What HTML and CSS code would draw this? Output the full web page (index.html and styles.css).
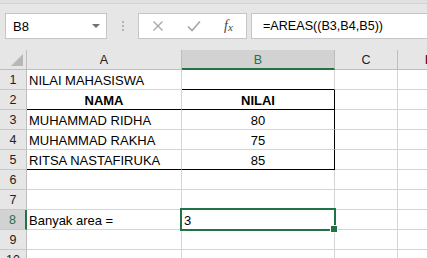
FILE: index.html
```html
<!DOCTYPE html>
<html>
<head>
<meta charset="utf-8">
<link rel="stylesheet" href="styles.css">
</head>
<body>
<div class="app">
  <div class="toolbar">
    <div class="namebox">
      <span class="ref">B8</span>
      <span class="caret"></span>
    </div>
    <div class="grip"><i></i><i></i><i></i></div>
    <div class="btnbox">
      <svg class="ico" width="12" height="12" viewBox="0 0 12 12"><path d="M1.5 1.5 L10.5 10.5 M10.5 1.5 L1.5 10.5" stroke="#a6a6a6" stroke-width="1.3" fill="none"/></svg>
      <svg class="ico chk" width="14" height="12" viewBox="0 0 14 12"><path d="M1 6.5 L5 10.5 L13 1.5" stroke="#a6a6a6" stroke-width="1.6" fill="none"/></svg>
      <span class="fx">f<sub>x</sub></span>
    </div>
    <div class="formula">=AREAS((B3,B4,B5))</div>
  </div>
  <div class="sheet">
    <div class="corner"><span class="tri"></span></div>
    <div class="ch">A</div>
    <div class="ch sel">B</div>
    <div class="ch">C</div>
    <div class="ch dcol">D</div>

    <div class="rh">1</div>
    <div class="c">NILAI MAHASISWA</div>
    <div class="c bb"></div>
    <div class="c"></div>
    <div class="c"></div>

    <div class="rh">2</div>
    <div class="c b ctr bb">NAMA</div>
    <div class="c b ctr br bb">NILAI</div>
    <div class="c"></div>
    <div class="c"></div>

    <div class="rh">3</div>
    <div class="c">MUHAMMAD RIDHA</div>
    <div class="c ctr br">80</div>
    <div class="c"></div>
    <div class="c"></div>

    <div class="rh">4</div>
    <div class="c">MUHAMMAD RAKHA</div>
    <div class="c ctr br">75</div>
    <div class="c"></div>
    <div class="c"></div>

    <div class="rh">5</div>
    <div class="c bbk">RITSA NASTAFIRUKA</div>
    <div class="c ctr br bbk">85</div>
    <div class="c"></div>
    <div class="c"></div>

    <div class="rh">6</div>
    <div class="c"></div>
    <div class="c"></div>
    <div class="c"></div>
    <div class="c"></div>

    <div class="rh">7</div>
    <div class="c"></div>
    <div class="c"></div>
    <div class="c"></div>
    <div class="c"></div>

    <div class="rh sel">8</div>
    <div class="c">Banyak area =</div>
    <div class="c active">3<span class="selbox"><span class="handle"></span></span></div>
    <div class="c"></div>
    <div class="c"></div>

    <div class="rh">9</div>
    <div class="c"></div>
    <div class="c"></div>
    <div class="c"></div>
    <div class="c"></div>

    <div class="rh">10</div>
    <div class="c"></div>
    <div class="c"></div>
    <div class="c"></div>
    <div class="c"></div>
  </div>
</div>
</body>
</html>
```

FILE: styles.css
```css
html, body {
  margin: 0;
  padding: 0;
  background: #ffffff;
  overflow: hidden;
}
.app {
  width: 427px;
  height: 258px;
  overflow: hidden;
  font-family: "Liberation Sans", Arial, sans-serif;
  color: #000;
}
.toolbar {
  height: 50px;
  box-sizing: border-box;
  background: #e6e6e6;
  border-top: 3px solid #e1e1e1;
  position: relative;
  display: flex;
  align-items: flex-start;
  padding-top: 10px;
  padding-left: 5px;
}
.toolbar::before {
  content: "";
  position: absolute;
  left: 0; right: 0; top: 0;
  height: 1px;
  background: #d2d2d2;
}
.namebox {
  width: 102px;
  height: 26px;
  box-sizing: border-box;
  background: #fff;
  border: 1px solid #c6c6c6;
  display: flex;
  align-items: center;
  justify-content: space-between;
  padding: 0 6px 0 7px;
  font-size: 13px;
}
.caret {
  width: 0; height: 0;
  border-left: 4px solid transparent;
  border-right: 4px solid transparent;
  border-top: 4px solid #707070;
}
.grip {
  width: 31px;
  height: 26px;
  display: flex;
  flex-direction: column;
  align-items: center;
  justify-content: center;
  gap: 2px;
}
.grip i {
  display: block;
  width: 2px;
  height: 2px;
  background: #b4b4b4;
}
.btnbox {
  width: 109px;
  height: 26px;
  box-sizing: border-box;
  background: #fff;
  border: 1px solid #c6c6c6;
  display: flex;
  align-items: center;
  padding-left: 13px;
}
.ico { display: block; }
.chk { margin-left: 23px; }
.fx {
  margin-left: 23px;
  font-family: "Liberation Serif", "Times New Roman", serif;
  font-style: italic;
  font-size: 14px;
  color: #444;
  line-height: 1;
}
.fx sub {
  font-size: 11px;
  vertical-align: -1px;
}
.formula {
  margin-left: 4px;
  flex: 1;
  height: 26px;
  box-sizing: border-box;
  background: #fff;
  border: 1px solid #c6c6c6;
  border-right: none;
  display: flex;
  align-items: center;
  padding-left: 11px;
  font-size: 12.6px;
  white-space: nowrap;
}
.sheet {
  display: grid;
  grid-template-columns: 27px 155px 153px 63px 60px;
  grid-auto-rows: 20px;
}
.sheet > div {
  box-sizing: border-box;
  border-right: 1px solid #d4d4d4;
  border-bottom: 1px solid #d4d4d4;
  font-size: 13px;
  display: flex;
  align-items: center;
  white-space: nowrap;
  overflow: visible;
}
.corner {
  background: #e6e6e6;
  border-right-color: #bdbdbd !important;
  border-bottom-color: #bdbdbd !important;
  position: relative;
}
.tri {
  position: absolute;
  right: 3px;
  bottom: 3px;
  width: 0; height: 0;
  border-left: 12px solid transparent;
  border-bottom: 12px solid #b7b7b7;
}
.ch {
  background: #e6e6e6;
  justify-content: center;
  font-size: 12.5px !important;
  color: #222;
  border-right-color: #bdbdbd !important;
  border-bottom-color: #bdbdbd !important;
  padding-top: 1px;
}
.ch.sel {
  background: #d2d2d2;
  color: #217346;
  border-bottom: 2px solid #217346 !important;
  padding-top: 2px;
}
.dcol {
  justify-content: flex-start !important;
  padding-left: 27px;
  color: #7a0a2a !important;
  font-weight: bold;
}
.rh {
  background: #e6e6e6;
  justify-content: center;
  color: #222;
  font-size: 12.5px !important;
  border-right-color: #bdbdbd !important;
  border-bottom-color: #c8c8c8 !important;
  padding-top: 1px;
}
.rh.sel {
  background: #d2d2d2;
  color: #217346;
  border-right: 2px solid #217346 !important;
}
.c {
  padding-left: 2px;
  padding-top: 1px;
}
.c.ctr { justify-content: center; padding-left: 0; }
.c.b { font-weight: bold; }
.c.bb { border-bottom-color: #000 !important; }
.c.bbk { border-bottom-color: #000 !important; }
.c.br { border-right-color: #000 !important; }
.active {
  position: relative;
}
.selbox {
  position: absolute;
  left: -2px;
  top: -2px;
  right: -2px;
  bottom: -2px;
  border: 2px solid #217346;
}
.handle {
  position: absolute;
  right: -4px;
  bottom: -4px;
  width: 6px;
  height: 6px;
  background: #217346;
  border: 1px solid #fff;
}
```
